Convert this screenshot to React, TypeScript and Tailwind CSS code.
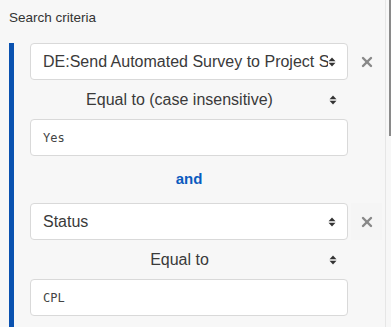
import { X } from "lucide-react";

function SortArrows() {
  return (
    <svg width="8" height="10" viewBox="0 0 8 10" className="shrink-0">
      <path d="M4 0.5 L7.5 4.2 H0.5 Z" fill="#333" />
      <path d="M4 9.5 L7.5 5.8 H0.5 Z" fill="#333" />
    </svg>
  );
}

function Remove({ hover = false }: { hover?: boolean }) {
  return (
    <div
      className={`flex h-[37px] w-[31px] items-center justify-center ${hover ? "bg-[#f5f5f5]" : ""}`}
    >
      <X className="h-[16px] w-[16px] text-[#888]" strokeWidth={3.6} />
    </div>
  );
}

function FieldSelect({ label, hover = false }: { label: string; hover?: boolean }) {
  return (
    <div className="flex items-center gap-[3px]">
      <div className="flex h-[37px] w-[318px] items-center rounded-[4px] border border-[#d9d9d9] bg-white pl-3 pr-[11px]">
        <span className="flex-1 overflow-hidden whitespace-nowrap text-[16px] text-[#3a3a3a]">
          {label}
        </span>
        <SortArrows />
      </div>
      <Remove hover={hover} />
    </div>
  );
}

function OperatorSelect({ label }: { label: string }) {
  return (
    <div className="flex h-[39px] w-[318px] items-center pr-[11px]">
      <span className="flex-1 text-center text-[16px] text-[#3a3a3a]">{label}</span>
      <SortArrows />
    </div>
  );
}

function ValueInput({ value }: { value: string }) {
  return (
    <div className="flex h-[37px] w-[318px] items-center rounded-[4px] border border-[#d9d9d9] bg-white pl-3 font-['DejaVu_Sans_Mono',monospace] text-[12px] text-[#444]">
      {value}
    </div>
  );
}

export default function App() {
  return (
    <div className="flex h-[327px] w-[391px] overflow-hidden bg-[#f7f7f7] font-['Liberation_Sans',Arial,sans-serif]">
      <div className="flex-1 pl-[9px]">
        <div className="flex h-[43px] items-start pt-[8px] text-[13.5px] text-[#333]">
          Search criteria
        </div>
        <div className="h-[300px] border-l-[5px] border-[#0a52b0] pl-[16px]">
          <FieldSelect label="DE:Send Automated Survey to Project Stakeholders" />
          <OperatorSelect label="Equal to (case insensitive)" />
          <ValueInput value="Yes" />
          <div className="flex h-[47px] w-[318px] items-center justify-center text-[15px] font-bold text-[#0a5bbf]">
            and
          </div>
          <FieldSelect label="Status" hover />
          <OperatorSelect label="Equal to" />
          <ValueInput value="CPL" />
        </div>
      </div>
      <div className="flex w-[6px] justify-end border-l border-[#e6e6e6] bg-[#f7f7f7]">
        <div className="h-[136px] w-[2px] bg-[#8a8a8a]" />
      </div>
    </div>
  );
}
